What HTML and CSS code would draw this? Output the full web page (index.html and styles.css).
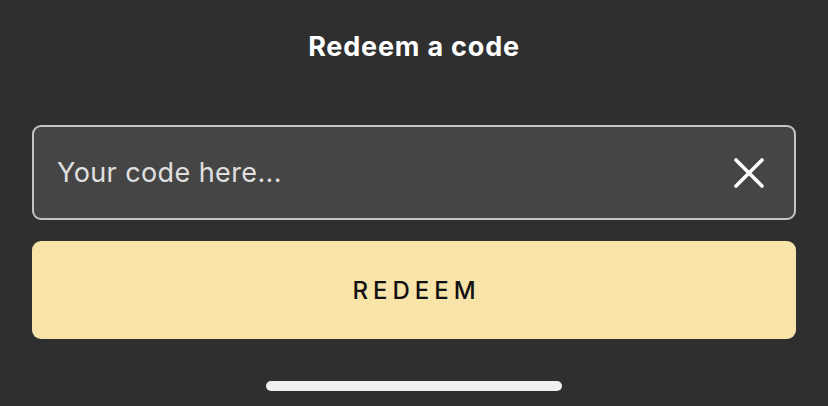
FILE: index.html
```html
<!DOCTYPE html>
<html lang="en">
<head>
    <meta charset="UTF-8">
    <meta name="viewport" content="width=device-width, initial-scale=1.0">
    <title>Redeem a code</title>
    <link rel="stylesheet" href="styles.css">
</head>
<body>
    <div class="sheet">
        <h1 class="title">Redeem a code</h1>
        <form class="redeem-form" onsubmit="return false;">
            <div class="code-field">
                <input type="text" id="code" placeholder="Your code here...">
                <button type="button" class="clear-btn" aria-label="Clear" onclick="document.getElementById('code').value = ''">
                    <svg width="30" height="30" viewBox="0 0 30 30">
                        <path d="M2 2 L28 28 M28 2 L2 28" stroke="#fff" stroke-width="3.6" stroke-linecap="round" fill="none"/>
                    </svg>
                </button>
            </div>
            <button type="submit" class="redeem-btn">REDEEM</button>
        </form>
        <div class="home-bar"></div>
    </div>
</body>
</html>
```

FILE: styles.css
```css
body {
    font-family: Inter, "Noto Sans", sans-serif;
    background-color: #2f2f2f;
    margin: 0;
    padding: 0;
}
.sheet {
    display: flex;
    flex-direction: column;
    height: 406px;
    padding: 0 32px;
    box-sizing: border-box;
}
.title {
    margin: 30px 0 0;
    height: 34px;
    line-height: 34px;
    font-size: 27px;
    font-weight: 700;
    letter-spacing: 0.8px;
    color: #fff;
    text-align: center;
}
.redeem-form {
    display: flex;
    flex-direction: column;
    gap: 21px;
    margin-top: 61px;
}
.code-field {
    display: flex;
    align-items: center;
    height: 95px;
    box-sizing: border-box;
    background-color: #454545;
    border: 2px solid #c4c4c4;
    border-radius: 9px;
    padding: 0 30px 0 23px;
}
.code-field input {
    flex: 1;
    min-width: 0;
    background: none;
    border: none;
    outline: none;
    color: #fff;
    font-family: inherit;
    font-size: 27px;
    letter-spacing: 0.4px;
    padding: 0;
}
.code-field input::placeholder {
    color: #e0e0e0;
}
.clear-btn {
    display: flex;
    background: none;
    border: none;
    padding: 0;
    cursor: pointer;
}
.redeem-btn {
    height: 98px;
    background-color: #f8e4a9;
    border: none;
    border-radius: 9px;
    padding: 0 0 0 5px;
    color: #111;
    font-family: inherit;
    font-size: 24px;
    font-weight: 500;
    letter-spacing: 5px;
    cursor: pointer;
}
.home-bar {
    align-self: center;
    width: 296px;
    height: 10px;
    border-radius: 5px;
    background-color: #f0f0f0;
    margin-top: auto;
    margin-bottom: 15px;
}
```
